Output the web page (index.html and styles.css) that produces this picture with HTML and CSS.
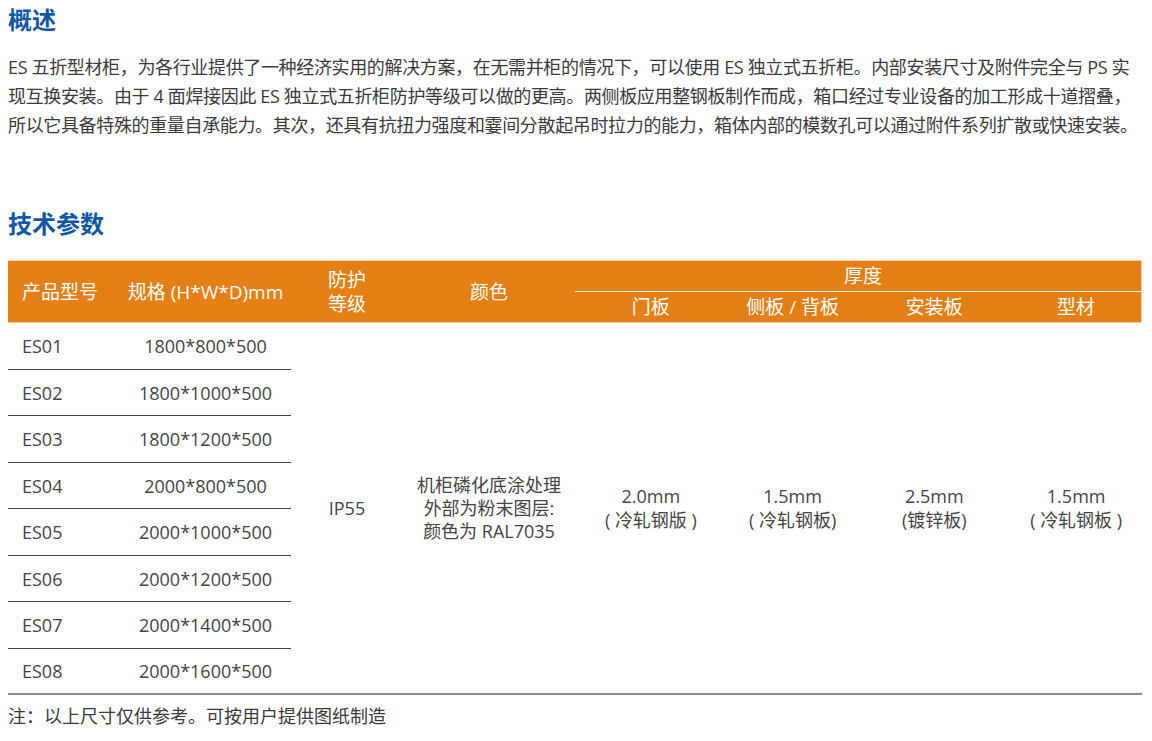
FILE: index.html
```html
<!DOCTYPE html>
<html lang="zh-CN">
<head>
<meta charset="utf-8">
<title>ES 五折型材柜</title>
<link rel="stylesheet" href="styles.css">
</head>
<body>
<div class="page">
  <h2 class="title title-first">概述</h2>
  <p class="intro">ES 五折型材柜，为各行业提供了一种经济实用的解决方案，在无需并柜的情况下，可以使用 ES 独立式五折柜。内部安装尺寸及附件完全与 PS 实现互换安装。由于 4 面焊接因此 ES 独立式五折柜防护等级可以做的更高。两侧板应用整钢板制作而成，箱口经过专业设备的加工形成十道摺叠，所以它具备特殊的重量自承能力。其次，还具有抗扭力强度和霎间分散起吊时拉力的能力，箱体内部的模数孔可以通过附件系列扩散或快速安装。</p>

  <h2 class="title title-second">技术参数</h2>
  <table class="spec">
    <colgroup>
      <col class="c-model">
      <col class="c-size">
      <col class="c-ip">
      <col class="c-color">
      <col class="c-thick">
      <col class="c-thick">
      <col class="c-thick">
      <col class="c-thick">
    </colgroup>
    <thead>
      <tr class="h1">
        <th rowspan="2" class="th-left">产品型号</th>
        <th rowspan="2">规格 (H*W*D)mm</th>
        <th rowspan="2">防护<br>等级</th>
        <th rowspan="2">颜色</th>
        <th colspan="4" class="th-group">厚度</th>
      </tr>
      <tr class="h2">
        <th class="th-sub">门板</th>
        <th class="th-sub">侧板 / 背板</th>
        <th class="th-sub">安装板</th>
        <th class="th-sub th-last">型材</th>
      </tr>
    </thead>
    <tbody>
      <tr>
        <td class="td-model">ES01</td>
        <td class="td-size">1800*800*500</td>
        <td rowspan="8" class="td-merge">IP55</td>
        <td rowspan="8" class="td-merge">机柜磷化底涂处理<br>外部为粉末图层:<br>颜色为 RAL7035</td>
        <td rowspan="8" class="td-merge td-sub">2.0mm<br>( 冷轧钢版 )</td>
        <td rowspan="8" class="td-merge td-sub">1.5mm<br>( 冷轧钢板)</td>
        <td rowspan="8" class="td-merge td-sub">2.5mm<br>(镀锌板)</td>
        <td rowspan="8" class="td-merge td-sub">1.5mm<br>( 冷轧钢板 )</td>
      </tr>
      <tr><td class="td-model">ES02</td><td class="td-size">1800*1000*500</td></tr>
      <tr><td class="td-model">ES03</td><td class="td-size">1800*1200*500</td></tr>
      <tr><td class="td-model">ES04</td><td class="td-size">2000*800*500</td></tr>
      <tr><td class="td-model">ES05</td><td class="td-size">2000*1000*500</td></tr>
      <tr><td class="td-model">ES06</td><td class="td-size">2000*1200*500</td></tr>
      <tr><td class="td-model">ES07</td><td class="td-size">2000*1400*500</td></tr>
      <tr class="last"><td class="td-model">ES08</td><td class="td-size">2000*1600*500</td></tr>
    </tbody>
  </table>
  <p class="note">注：以上尺寸仅供参考。可按用户提供图纸制造</p>
</div>
</body>
</html>
```

FILE: styles.css
```css
html, body {
  margin: 0;
  padding: 0;
  background: #ffffff;
}

body {
  font-family: "Open Sans", "Noto Sans CJK SC", sans-serif;
  color: #3c3c3c;
}

.page {
  width: 1134px;
  padding: 3px 8px 0 8px;
}

.title {
  margin: 0;
  font-family: "Noto Sans CJK SC", sans-serif;
  font-size: 24px;
  line-height: 32px;
  font-weight: 700;
  color: #0f56a4;
}

.intro {
  margin: 18px 0 0 0;
  font-size: 18px;
  line-height: 29px;
  letter-spacing: -0.35px;
  color: #3a3a3a;
}

.title-second {
  margin-top: 67px;
}

.spec {
  margin-top: 21px;
  width: 1134px;
  table-layout: fixed;
  border-collapse: separate;
  border-spacing: 0;
  font-size: 18px;
  color: #444444;
}

.c-model { width: 112px; }
.c-size { width: 171px; }
.c-ip { width: 112px; }
.c-color { width: 172px; }
.c-thick { width: 141.75px; }

.spec th,
.spec td {
  box-sizing: border-box;
  padding: 0;
  vertical-align: middle;
  text-align: center;
}

.spec thead th {
  background: #e47f15;
  color: #ffffff;
  font-weight: 400;
  font-size: 19px;
  line-height: 24px;
}

.spec .h1 th {
  height: 32px;
  border-top: 1px solid #f6cda4;
}

.spec .h1 th[rowspan] {
  border-bottom: 1px solid #f6cda4;
}

.spec .th-left {
  text-align: left;
  padding-left: 14px;
}

.spec .th-group {
  border-bottom: 1px solid #ffffff;
  border-right: 1px solid #f6cda4;
  padding-left: 10px;
}

.spec .h2 th {
  height: 31px;
  border-bottom: 1px solid #f6cda4;
  padding-left: 10px;
}

.spec .th-last {
  border-right: 1px solid #f6cda4;
}

.spec tbody tr:nth-child(odd) td {
  height: 47px;
}

.spec tbody tr:nth-child(even) td {
  height: 46px;
}

.spec .td-model {
  text-align: left;
  padding-left: 14px;
  border-bottom: 1px solid #454545;
}

.spec .td-size {
  border-bottom: 1px solid #454545;
}

.spec .last .td-model,
.spec .last .td-size {
  border-bottom: 2px solid #8a8a8a;
}

.spec .td-merge {
  line-height: 23px;
  border-bottom: 2px solid #8a8a8a;
}

.spec .td-sub {
  padding-left: 10px;
  line-height: 24px;
}

.note {
  margin: 7px 0 0 0;
  font-size: 18px;
  line-height: 29px;
  color: #3a3a3a;
}
```
